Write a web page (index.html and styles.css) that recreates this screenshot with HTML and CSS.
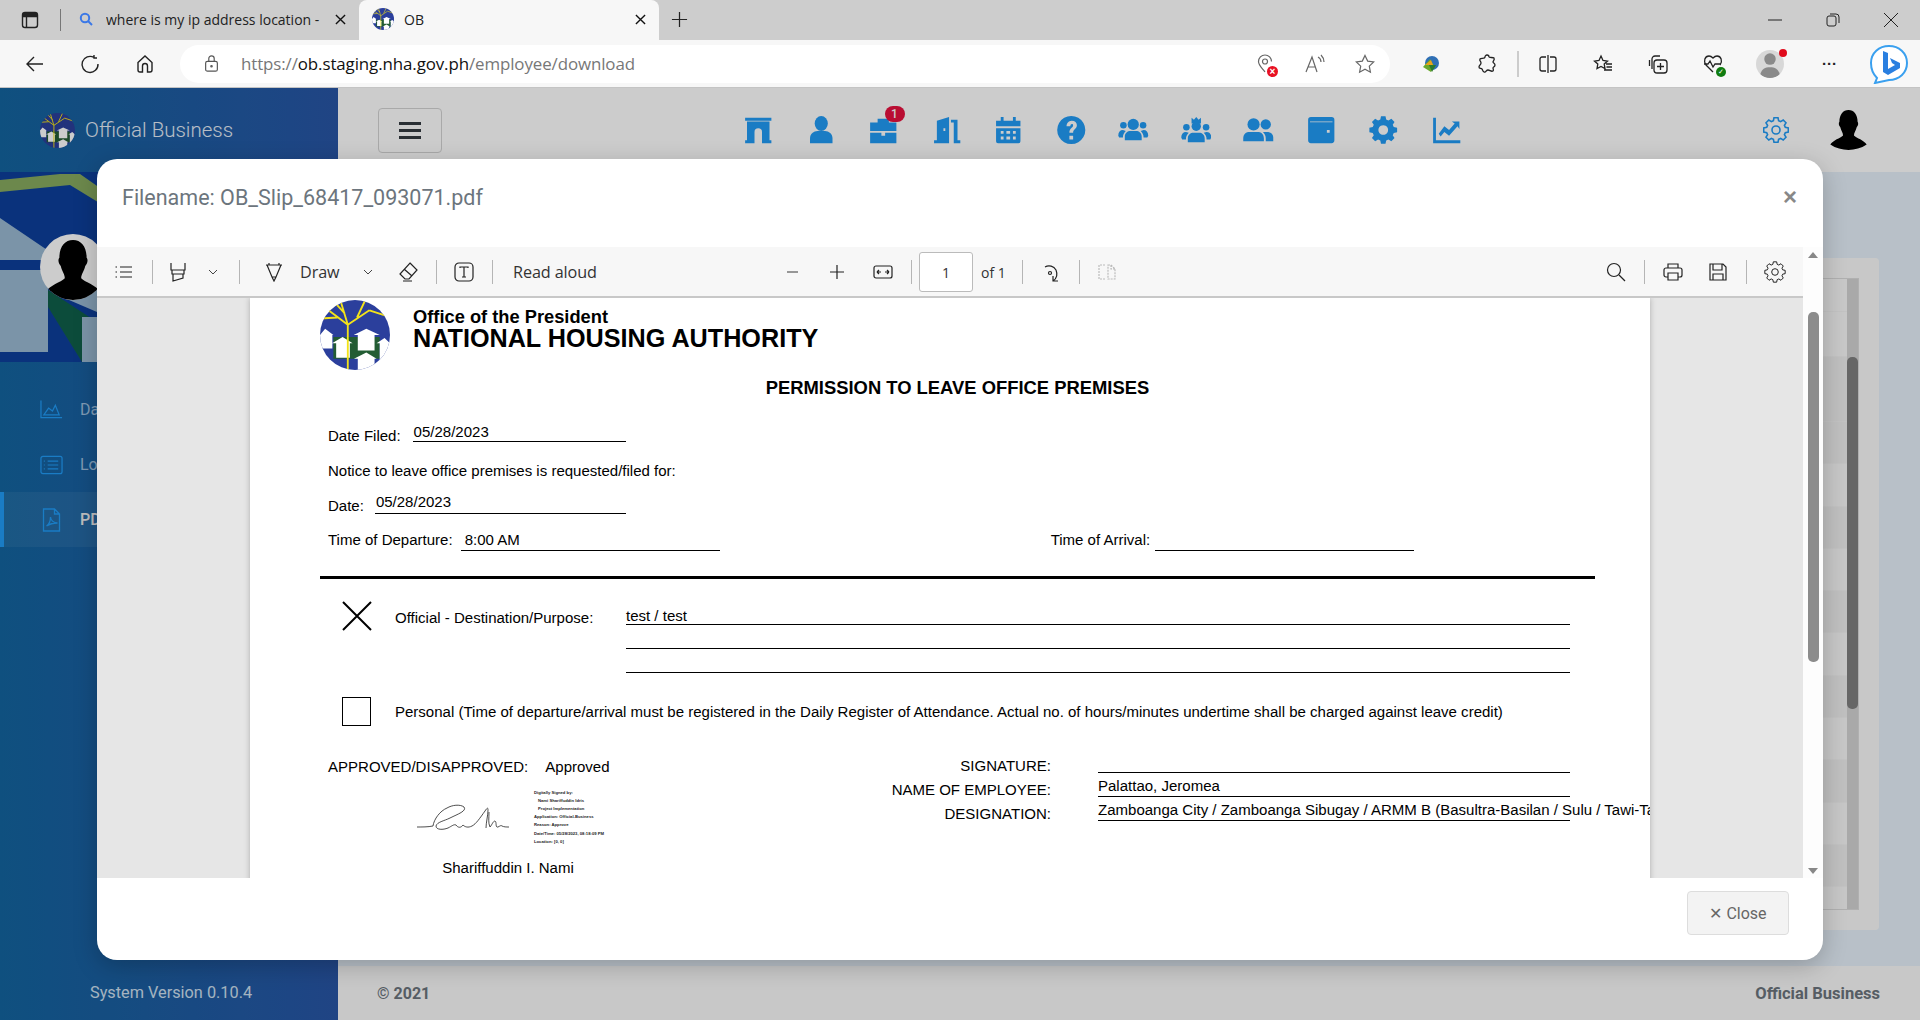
FILE: index.html
```html
<!DOCTYPE html>
<html lang="en">

<head>
  <meta charset="UTF-8">
  <title>OB</title>
  <link rel="stylesheet" href="styles.css">
</head>

<body>
  <svg class="defs" width="0" height="0">
    <symbol id="nha" viewBox="0 0 68 68">
      <clipPath id="nha-clip"><ellipse cx="34" cy="34" rx="34" ry="34" /></clipPath>
      <g clip-path="url(#nha-clip)">
        <rect width="68" height="68" fill="#2b3f9c" />
        <path d="M13 36h45v21H13z" fill="#235c33" />
        <path d="M0 34l5-6 8 6h-1v13H0zM11.700 42 22 36l9.700 6H29v14H15.700V42zM32.700 34 45 28l13 6h-5v15H36.700V34zM55 42l7.700-5 5.300 5v18H58V42zM33 57l12-6 10 6h-2v11H36.700V57z" fill="#fff" />
        <path d="M27 68V24M27 24 7 9M17 17 0 18M27 24 20 1M24 13 14 2M27 24 48 10M48 10l18 6M36 17 44 0" stroke="#f2e21a" stroke-width="1.800" fill="none" />
      </g>
    </symbol>
    <symbol id="silhouette" viewBox="0 0 40 44">
      <path d="M10 13C10 5 14 0 20 0s10 5 10 13c1 1 1 4-1 6-1 4-3 6-3 9 3 3 11 5 14 10-6 4-13 6-20 6S6 42 0 38c3-5 11-7 14-10 0-3-2-5-3-9-2-2-2-5-1-6z" />
    </symbol>
    <symbol id="gear" viewBox="-1 1 26 26.6">
      <path d="M10 2h4l.6 3 2 .9 2.6-1.6 2.8 2.8-1.6 2.6.9 2 3 .6v4l-3 .6-.9 2 1.6 2.6-2.8 2.8-2.6-1.6-2 .9-.6 3h-4l-.6-3-2-.9-2.6 1.6-2.8-2.8 1.6-2.6-.9-2-3-.6v-4l3-.6.9-2-1.6-2.6 2.8-2.8 2.6 1.6 2-.9z" />
      <circle cx="12" cy="14.3" r="4" />
    </symbol>
    <symbol id="gear-solid" viewBox="-1 1 26 26.6">
      <path fill-rule="evenodd" d="M10 2h4l.6 3 2 .9 2.6-1.6 2.8 2.8-1.6 2.6.9 2 3 .6v4l-3 .6-.9 2 1.6 2.6-2.8 2.8-2.6-1.6-2 .9-.6 3h-4l-.6-3-2-.9-2.6 1.6-2.8-2.8 1.6-2.6-.9-2-3-.6v-4l3-.6.9-2-1.6-2.6 2.8-2.8 2.6 1.6 2-.9zM12 10a4.300 4.300 0 1 0 .01 0z" />
    </symbol>
  </svg>

  <!-- browser chrome -->
  <div class="tabstrip">
    <svg class="sidebar-toggle" viewBox="0 0 20 20"><rect x="2.5" y="2.5" width="15" height="15" rx="2.5" /><path d="M2.5 6.5h15M6.5 6.5v11" /><path d="M3 3h14v3.4H3z" class="solid" /></svg>
    <span class="tab-sep"></span>
    <div class="tab">
      <svg class="tab-icon" viewBox="0 0 16 16"><circle cx="7" cy="7" r="4.2" /><path d="M10 10l4 4" /></svg>
      <span class="tab-title">where is my ip address location -</span>
      <svg class="tab-x" viewBox="0 0 12 12"><path d="M1 1l10 10M11 1 1 11" /></svg>
    </div>
    <div class="tab active">
      <svg class="favicon"><use href="#nha" /></svg>
      <span class="tab-title">OB</span>
      <svg class="tab-x" viewBox="0 0 12 12"><path d="M1 1l10 10M11 1 1 11" /></svg>
    </div>
    <svg class="new-tab" viewBox="0 0 18 18"><path d="M9 1v16M1 9h16" /></svg>
    <div class="window-btns">
      <svg viewBox="0 0 14 14"><path d="M0 7h14" /></svg>
      <svg viewBox="0 0 14 14"><rect x="1" y="3" width="9" height="10" rx="2" /><path d="M4 1h6a3 3 0 0 1 3 3v6" /></svg>
      <svg viewBox="0 0 14 14"><path d="M0 0l14 14M14 0 0 14" /></svg>
    </div>
  </div>

  <div class="addressbar">
    <svg class="nav-btn" viewBox="0 0 20 20"><path d="M18 10H2M9 3l-7 7 7 7" /></svg>
    <svg class="nav-btn" viewBox="0 0 20 20"><path d="M14 3.5A8 8 0 1 0 18 10M14 1v3h3" /></svg>
    <svg class="nav-btn" viewBox="0 0 20 20"><path d="M3 8.5 10 2l7 6.500V16a2 2 0 0 1-2 2h-2.500v-6a2.500 2.500 0 0 0-5 0v6H5a2 2 0 0 1-2-2z" /></svg>
    <div class="url-pill">
      <svg class="lock" viewBox="0 0 16 20"><rect x="1.500" y="7" width="13" height="11" rx="2" /><path d="M5 7V4a3 3 0 0 1 6 0v3" /><circle cx="8" cy="12.500" r=".8" /></svg>
      <span class="url"><span class="url-dim">https://</span>ob.staging.nha.gov.ph<span class="url-dim">/employee/download</span></span>
      <div class="url-actions">
        <span class="url-action">
          <svg viewBox="0 0 20 20"><path d="M10 18C6 13 3.500 11 3.500 7.500a6.500 6.500 0 0 1 13 0" /><circle cx="10" cy="7.500" r="2.500" /></svg>
          <span class="blocked">×</span>
        </span>
        <span class="url-action"><svg viewBox="0 0 20 20"><path d="M1 18 7 3l5 15M3 13h7M13 3c2 1 3 3 3 5M16 1c2 2 3 4 3 7" /></svg></span>
        <span class="url-action"><svg viewBox="0 0 20 20"><path d="m10 1.500 2.700 5.600 6 .8-4.400 4.200 1.100 6.100-5.400-3-5.400 3 1.100-6.100L1.300 7.900l6-.8z" /></svg></span>
      </div>
    </div>
    <div class="ext-row">
      <svg class="ext idm" viewBox="0 0 20 20"><circle cx="11" cy="9" r="7" fill="#2f6fb5" /><path d="M2 13 9 5l4 7-3 6z" fill="#6aa82c" /><path d="M4 11 10 6l2 5z" fill="#e8a21c" /><path d="M8 11h7l-4 7z" fill="#2c7a2c" /></svg>
      <svg class="ext" viewBox="0 0 20 20"><path d="M8 3a2 2 0 0 1 4 0c0 1 4 0 5 1 1 2-1 3-1 4 0 1 2 1 2 3s-2 2-2 3 1 2 0 3c-2 1-3-1-5-1s-2 3-4 2-1-2-2-3-3 0-3-2 2-2 2-4-2-2-1-4c1-1 5 0 5-2z" /></svg>
      <span class="ext-sep"></span>
      <svg class="ext" viewBox="0 0 20 20"><path d="M8 3H4a2 2 0 0 0-2 2v10a2 2 0 0 0 2 2h4M12 3h4a2 2 0 0 1 2 2v10a2 2 0 0 1-2 2h-4M10 1v18" /></svg>
      <svg class="ext" viewBox="0 0 20 20"><path d="m8 2 2 4.500 4.500.6-3.300 3 .8 4.500L8 12.500 4 14.600l.8-4.500-3.300-3L6 6.500zM13 10h6M13.500 13H19M11 16h8" /></svg>
      <svg class="ext" viewBox="0 0 20 20"><path d="M4 15V5a3 3 0 0 1 3-3h5M1.500 12V6" /><rect x="6" y="6" width="13" height="13" rx="3" /><path d="M12.500 9v7M9 12.500h7" /></svg>
      <span class="ext-health">
        <svg class="ext" viewBox="0 0 20 20"><path d="M10 18 3 11C0 7 2 2 6 2c2 0 3 1 4 2 1-1 2-2 4-2 4 0 6 5 3 9M1 10h4l2-3 3 6 2-3h6" /></svg>
        <span class="health-ok">✓</span>
      </span>
      <span class="profile"><svg viewBox="0 0 28 34"><circle cx="14" cy="11" r="7" /><path d="M2 30c2-7 6-9 12-9s10 2 12 9c-3 3-7 4-12 4S5 33 2 30z" /></svg><span class="profile-dot"></span></span>
      <span class="ext-dots">···</span>
      <span class="bing"><svg viewBox="0 0 40 40"><path d="M20 2c10 0 18 7 18 17S30 36 20 36l-14 3 2-5C4 30 2 25 2 19 2 9 10 2 20 2z" fill="#fff" stroke="#3aa0ef" stroke-width="2" /><path d="M14 7l5 2v16l7-4-3-2-2-5 10 5v5l-12 7-5-3z" fill="#2a7fe0" /></svg></span>
    </div>
  </div>

  <!-- application behind the dialog -->
  <div class="app">
    <aside class="sidebar">
      <div class="brand">
        <svg class="brand-logo"><use href="#nha" /></svg>
        <span class="brand-name">Official Business</span>
      </div>
      <div class="cover">
        <svg viewBox="0 0 338 190" preserveAspectRatio="none">
          <rect width="338" height="190" fill="#0d3f9c" />
          <path d="M0 8 60 2h20l40 28-14 5-36-22L0 20z" fill="#88aa60" />
          <path d="M0 46 62 88H0zM0 98h48v82H0z" fill="#9ab9d2" />
          <path d="M48 118 97 150v40H82L48 135z" fill="#10604a" />
          <path d="M55 122 97 100v40zM82 145h30v45H82z" fill="#9ab9d2" />
        </svg>
        <span class="avatar"><svg><use href="#silhouette" /></svg></span>
      </div>
      <nav class="menu">
        <a class="menu-item">
          <svg viewBox="0 0 24 20"><path d="M1 0v18h22M4 15l5-7 4 3 3-6 4 10z" /></svg>
          <span>Dashboard</span>
        </a>
        <a class="menu-item">
          <svg viewBox="0 0 24 20"><rect x="1" y="1" width="22" height="18" rx="2" /><path d="M8 6h11M8 10h11M8 14h11M4 6h1M4 10h1M4 14h1" /></svg>
          <span>Logs</span>
        </a>
        <a class="menu-item current">
          <svg viewBox="0 0 18 24"><path d="M1 1h11l5 5v17H1zM12 1v5h5M4 18c3-2 4-6 4-9 0 3 3 6 7 6-4 0-8 1-11 3z" /></svg>
          <span>PDF</span>
        </a>
      </nav>
      <footer class="sidebar-foot">System Version 0.10.4</footer>
    </aside>

    <div class="content">
      <header class="topbar">
        <button class="hamburger"><i></i><i></i><i></i></button>
        <div class="top-icons">
          <svg class="ti" viewBox="0 0 32 32"><path d="M2 3h28v3H2zM4 7h24v20h2v3H20v-3V18a4 4 0 0 0-8 0v9 3H2v-3h2z" /></svg>
          <svg class="ti" viewBox="0 0 32 32"><ellipse cx="16" cy="9" rx="7" ry="8" /><path d="M4 30v-5c0-5 4-8 8-8h8c4 0 8 3 8 8v5z" /></svg>
          <span class="ti-badge">
            <svg class="ti" viewBox="0 0 32 32"><path d="M10 8V4h12v4h8v9H2V8zM2 19h12v3h4v-3h12v11H2z" /></svg>
            <span class="badge">1</span>
          </span>
          <svg class="ti" viewBox="0 0 32 32"><path d="M3 27h3V6l13-4v28H3zM13 14v3h2v-3z" fill-rule="evenodd" /><path d="M21 5h7v22h3v3h-7V8h-3z" /></svg>
          <svg class="ti" viewBox="0 0 32 32"><path d="M3 6h5V2h3v4h10V2h3v4h5v6H3zM3 14h26v14a2 2 0 0 1-2 2H5a2 2 0 0 1-2-2zM8 17v3h3v-3zm6 0v3h4v-3zm7 0v3h3v-3zM8 23v3h3v-3zm6 0v3h4v-3zm7 0v3h3v-3z" fill-rule="evenodd" /></svg>
          <svg class="ti" viewBox="0 0 32 32"><path d="M16 1a15 15 0 1 0 .01 0zM11 12c0-3 2-6 5.500-6s5.500 2 5.500 5c0 4-4 4-4 8h-4c0-5 4-5 4-8 0-2-3-2-3 1zM14 22h4v4h-4z" fill-rule="evenodd" /></svg>
          <svg class="ti" viewBox="0 0 32 32"><circle cx="16" cy="10" r="6" /><circle cx="5.500" cy="11" r="3.500" /><circle cx="26.500" cy="11" r="3.500" /><path d="M7 27v-4c0-4 3-6 6-6h6c3 0 6 2 6 6v4zM0 22c0-4 2-6 5-6l3 1c-2 2-3 4-3 7H1zM32 22c0-4-2-6-5-6l-3 1c2 2 3 4 3 7h4z" /></svg>
          <svg class="ti" viewBox="0 0 32 32"><path d="M11 3l2.500 2L16 2l2.500 3L21 3v6H11z" /><circle cx="16" cy="12" r="5" /><circle cx="5.500" cy="13" r="3.500" /><circle cx="26.500" cy="13" r="3.500" /><path d="M7 29v-4c0-4 3-6 6-6h6c3 0 6 2 6 6v4zM0 24c0-4 2-6 5-6l3 1c-2 2-3 4-3 7H1zM32 24c0-4-2-6-5-6l-3 1c2 2 3 4 3 7h4z" /></svg>
          <svg class="ti" viewBox="0 0 32 32"><circle cx="11" cy="10" r="6.500" /><circle cx="24" cy="10" r="5.500" /><path d="M0 28v-3c0-5 3-7 7-7h8c4 0 7 2 7 7v3zM24 28v-3c0-3-1-5-3-7h4c4 0 7 2 7 6v4z" /></svg>
          <svg class="ti" viewBox="0 0 32 32"><path d="M5 2h22a3 3 0 0 1 3 3v22a3 3 0 0 1-3 3H5a3 3 0 0 1-3-3V5a3 3 0 0 1 3-3zm-1 5v.800h24V7zM22 16v3h3v-3z" fill-rule="evenodd" /></svg>
          <svg class="ti"><use href="#gear-solid" /></svg>
          <svg class="ti" viewBox="0 0 32 32"><path d="M2 3h3v24h26v3H2zM8 20l6-8 5 4 6-7-3-2h8v8l-2-3-9 10-5-4-4 5z" /></svg>
        </div>
        <svg class="top-gear"><use href="#gear" /></svg>
        <svg class="top-user"><use href="#silhouette" /></svg>
      </header>
      <main class="page-body">
        <div class="panel">
          <div class="grid-box">
            <div class="tr head"></div>
            <div class="tr first"></div>
            <div class="tr tall"></div>
            <div class="tr"></div>
            <div class="tr"></div>
            <div class="tr"></div>
            <div class="tr"></div>
            <div class="tr"></div>
            <div class="tr"></div>
            <div class="tr"></div>
            <div class="tr"></div>
            <div class="tr"></div>
            <div class="tr"></div>
            <div class="tr"></div>
            <div class="grid-scroll"><span></span></div>
          </div>
        </div>
      </main>
      <footer class="foot">
        <span class="copy">© 2021</span>
        <span class="foot-name">Official Business</span>
      </footer>
    </div>
    <div class="backdrop"></div>

    <!-- pdf dialog -->
    <section class="modal">
      <div class="modal-head">
        <span class="modal-title">Filename: OB_Slip_68417_093071.pdf</span>
        <span class="modal-x">×</span>
      </div>
      <div class="modal-mid">
        <div class="viewer">
          <div class="pdf-tools">
            <div class="tool-group first-group">
              <svg class="tool" viewBox="0 0 20 20"><path d="M6 5h12M6 10h12M6 15h12M1.500 5h1.500M1.500 10h1.500M1.500 15h1.500" /></svg>
              <span class="sep ml11"></span>
              <svg class="tool ml8" viewBox="0 0 20 20"><path d="M3 1v7h14V1M4 8v4l12 0V8M5 12v7l10-3v-4" /></svg>
              <svg class="chev ml9" viewBox="0 0 10 6"><path d="m1 1 4 4 4-4" /></svg>
              <span class="sep ml17"></span>
              <svg class="tool ml17" viewBox="0 0 20 20"><path d="M2 3h16M5 1v2M15 1v2M3 3l5 12h4l5-12M8 15l2 4 2-4" /></svg>
              <span class="tool-label draw ml9">Draw</span>
              <svg class="chev ml19" viewBox="0 0 10 6"><path d="m1 1 4 4 4-4" /></svg>
              <svg class="tool ml14" viewBox="0 0 20 20"><path d="M12 1l7 7-8 9H7l-5-5zM6 7l8 7M5 19h9" /></svg>
              <span class="sep ml11"></span>
              <svg class="tool ml10" viewBox="0 0 20 20"><rect x="1" y="1" width="18" height="18" rx="4" /><path d="M6 6V5h8v1M10 5v10M8 15h4" /></svg>
              <span class="sep ml11"></span>
              <span class="tool-label ml20">Read aloud</span>
            </div>
            <div class="tool-group">
              <svg class="tool" viewBox="0 0 20 20"><path d="M5 10h11" class="soft" /></svg>
              <svg class="tool ml11" viewBox="0 0 20 20"><path d="M3 10h14M10 3v14" /></svg>
              <svg class="tool ml12" viewBox="0 0 20 20"><rect x="1" y="4" width="18" height="12" rx="2" /><path d="M4 10h4M4 10l2-2M4 10l2 2M16 10h-4M16 10l-2-2M16 10l-2 2" /></svg>
              <span class="sep ml11"></span>
              <input class="page-num ml7" value="1">
              <span class="page-of ml8">of 1</span>
              <span class="sep ml16"></span>
              <svg class="tool ml10" viewBox="0 0 20 20"><path d="M5 5a8 8 0 0 1 11 3c2 5 0 9-3 11M13 14v5h5" /><circle cx="10" cy="11" r="1.500" /></svg>
              <span class="sep ml12"></span>
              <svg class="tool ml10 faint" viewBox="0 0 20 20"><path d="M8 3H2v14h6M11 3h3l4 4v10h-7zM14 3v4h4" stroke-dasharray="2 1" /></svg>
            </div>
            <div class="tool-group last-group">
              <svg class="tool" viewBox="0 0 20 20"><circle cx="8" cy="8" r="6.500" /><path d="m13 13 6 6" /></svg>
              <span class="sep ml11"></span>
              <svg class="tool ml11" viewBox="0 0 20 20"><path d="M5 6V2h10v4M5 15H3a2 2 0 0 1-2-2V8a2 2 0 0 1 2-2h14a2 2 0 0 1 2 2v5a2 2 0 0 1-2 2h-2M5 11h10v7H5z" /></svg>
              <svg class="tool ml11" viewBox="0 0 20 20"><path d="M2 2h13l3 3v13H2zM5 2v6h9V2M5 18v-6h10v6" /></svg>
              <span class="sep ml11"></span>
              <svg class="tool ml11 tool-gear"><use href="#gear" /></svg>
            </div>
          </div>

          <div class="pdf-area">
            <div class="sheet">
              <div class="letterhead">
                <svg class="sheet-logo"><use href="#nha" /></svg>
                <div class="agency">
                  <div class="agency-top">Office of the President</div>
                  <div class="agency-name">NATIONAL HOUSING AUTHORITY</div>
                </div>
              </div>
              <h2 class="sheet-title">PERMISSION TO LEAVE OFFICE PREMISES</h2>

              <div class="line-row filed">
                <span>Date Filed:</span>
                <span class="field field-filed">05/28/2023</span>
              </div>
              <div class="line-row notice">Notice to leave office premises is requested/filed for:</div>
              <div class="line-row dated">
                <span>Date:</span>
                <span class="field field-date">05/28/2023</span>
              </div>
              <div class="line-row times">
                <span>Time of Departure:</span>
                <span class="field field-time">8:00 AM</span>
                <span class="arrival">Time of Arrival:</span>
                <span class="field field-time"></span>
              </div>
              <div class="rule"></div>

              <div class="choice official">
                <svg class="mark" viewBox="0 0 30 30"><path d="M1 1l28 28M29 1 1 29" /></svg>
                <span class="choice-label">Official - Destination/Purpose:</span>
                <div class="purpose">
                  <div class="purpose-line">test / test</div>
                  <div class="purpose-line"></div>
                  <div class="purpose-line"></div>
                </div>
              </div>
              <div class="choice personal">
                <span class="checkbox"></span>
                <span class="choice-label">Personal (Time of departure/arrival must be registered in the Daily Register of Attendance. Actual no. of hours/minutes undertime shall be charged against leave credit)</span>
              </div>

              <div class="signing">
                <div class="approver">
                  <div class="approved"><span>APPROVED/DISAPPROVED:</span><span>Approved</span></div>
                  <div class="sign-block">
                    <svg class="signature" viewBox="0 0 94 26"><path d="M1 22C6 22 12 22 17 21 18 14 24 6 31 3 36 0 44-1 48 2 51 6 42 9 34 13 28 16 21 17 20 21 20 25 27 25 32 23 36 21 38 19 40 20 42 23 45 23 47 20 49 22 52 23 56 21 60 19 64 13 69 6 71 3 72 2 72 5 72 10 70 18 70 23M73 7C73 13 72 18 74 22 76 20 77 16 79 16 81 17 79 23 82 22 84 21 85 20 86 21 88 22 90 22 93 22" /></svg>
                    <div class="stamp">
                      <div>Digitally Signed by:</div>
                      <div class="ind">Nami Shariffuddin Idris</div>
                      <div class="ind">Project Implementation</div>
                      <div>Application: Official-Business</div>
                      <div>Reason: Approve</div>
                      <div>Date/Time: 05/28/2023, 08:18:09 PM</div>
                      <div>Location: [0, 0]</div>
                    </div>
                  </div>
                  <div class="approver-name">Shariffuddin I. Nami</div>
                </div>
                <div class="employee">
                  <div class="emp-row"><span class="emp-label">SIGNATURE:</span><span class="emp-value"></span></div>
                  <div class="emp-row"><span class="emp-label">NAME OF EMPLOYEE:</span><span class="emp-value">Palattao, Jeromea</span></div>
                  <div class="emp-row"><span class="emp-label">DESIGNATION:</span><span class="emp-value long">Zamboanga City / Zamboanga Sibugay / ARMM B (Basultra-Basilan / Sulu / Tawi-Tawi)</span></div>
                </div>
              </div>
            </div>
          </div>
        </div>
        <div class="modal-scroll">
          <span class="arrow-up"></span>
          <span class="thumb"></span>
          <span class="arrow-down"></span>
        </div>
      </div>
      <div class="modal-foot">
        <button class="close-btn">✕ Close</button>
      </div>
    </section>
  </div>
</body>

</html>
```

FILE: styles.css
```css
* {
  box-sizing: border-box;
}

html,
body {
  margin: 0;
  height: 100%;
  overflow: hidden;
}

body {
  display: flex;
  flex-direction: column;
  font-family: Roboto, "Noto Sans", sans-serif;
  background: #fff;
}

.defs {
  position: absolute;
}

svg {
  display: block;
  flex: none;
}

/* browser chrome */

.tabstrip {
  height: 40px;
  background: #cdcdcd;
  display: flex;
  align-items: flex-end;
  flex: none;
}

.sidebar-toggle {
  width: 20px;
  height: 20px;
  margin: 0 20px 10px 20px;
  fill: none;
  stroke: #222;
  stroke-width: 1.4;
}

.sidebar-toggle .solid {
  fill: #222;
  stroke: none;
}

.tab-sep {
  width: 1px;
  height: 22px;
  background: #777;
  margin-bottom: 9px;
}

.tab {
  width: 298px;
  height: 40px;
  display: flex;
  align-items: center;
  padding: 0 13px 2px 17px;
  font-size: 14px;
  color: #222;
}

.tab.active {
  background: #f7f7f7;
  border-radius: 8px 8px 0 0;
  width: 300px;
  padding: 0 13px 2px 13px;
}

.tab-icon {
  width: 16px;
  height: 16px;
  fill: none;
  stroke: #3b78e7;
  stroke-width: 2;
  margin-right: 12px;
}

.favicon {
  width: 22px;
  height: 22px;
  margin-right: 10px;
}

.tab-title {
  flex: 1;
  white-space: nowrap;
  overflow: hidden;
  font-family: "Open Sans", sans-serif;
}

.tab-x {
  width: 11px;
  height: 11px;
  fill: none;
  stroke: #111;
  stroke-width: 1.5;
  flex: none;
}

.new-tab {
  width: 17px;
  height: 17px;
  margin: 0 0 12px 12px;
  fill: none;
  stroke: #222;
  stroke-width: 1.3;
}

.window-btns {
  margin-left: auto;
  display: flex;
  gap: 44px;
  padding: 0 22px 13px 0;
}

.window-btns svg {
  width: 14px;
  height: 14px;
  fill: none;
  stroke: #222;
  stroke-width: 1;
}

.addressbar {
  height: 48px;
  background: #f7f7f7;
  border-bottom: 1px solid #c4c4c4;
  display: flex;
  align-items: center;
  padding-left: 25px;
  flex: none;
}

.nav-btn {
  width: 20px;
  height: 20px;
  margin-right: 35px;
  fill: none;
  stroke: #222;
  stroke-width: 1.4;
}

.url-pill {
  width: 1210px;
  height: 38px;
  margin-left: -10px;
  background: #fff;
  border-radius: 19px;
  display: flex;
  align-items: center;
  padding-left: 24px;
}

.lock {
  width: 15px;
  height: 18px;
  fill: none;
  stroke: #555;
  stroke-width: 1.3;
}

.url {
  margin-left: 22px;
  font: 16.900px "Open Sans", sans-serif;
  color: #111;
  letter-spacing: -.1px;
}

.url-dim {
  color: #777;
}

.url-actions {
  margin-left: auto;
  display: flex;
  gap: 30px;
  padding-right: 15px;
}

.url-action {
  position: relative;
  width: 20px;
  height: 20px;
}

.url-action svg {
  width: 20px;
  height: 20px;
  fill: none;
  stroke: #666;
  stroke-width: 1.2;
}

.blocked {
  position: absolute;
  right: -3px;
  bottom: -3px;
  width: 11px;
  height: 11px;
  border-radius: 50%;
  background: #e81123;
  color: #fff;
  font: bold 10px/11px "Liberation Sans", sans-serif;
  text-align: center;
}

.ext-row {
  display: flex;
  align-items: center;
  flex: 1;
  padding-left: 31px;
}

.ext {
  width: 20px;
  height: 20px;
  margin-right: 35px;
  fill: none;
  stroke: #222;
  stroke-width: 1.3;
}

.idm {
  stroke: none;
  margin-right: 36px;
}

.ext-sep {
  width: 2px;
  height: 26px;
  background: #ccc;
  margin: 0 19px 0 -15px;
}

.ext-health {
  position: relative;
  margin-right: 35px;
}

.ext-health .ext {
  margin-right: 0;
}

.health-ok {
  position: absolute;
  right: -3px;
  bottom: -3px;
  width: 10px;
  height: 10px;
  border-radius: 50%;
  background: #107c10;
  color: #fff;
  font: bold 7px/10px "DejaVu Sans", sans-serif;
  text-align: center;
}

.profile {
  position: relative;
  width: 28px;
  height: 28px;
  border-radius: 50%;
  background: #d8d8d8;
  overflow: visible;
  margin-left: -2px;
}

.profile svg {
  width: 28px;
  height: 28px;
  fill: #8a8a8a;
  border-radius: 50%;
}

.profile-dot {
  position: absolute;
  top: -1px;
  right: -3px;
  width: 8px;
  height: 8px;
  border-radius: 50%;
  background: #e00b1c;
}

.ext-dots {
  margin-left: 38px;
  width: 20px;
  font: bold 15px "Liberation Sans", sans-serif;
  color: #222;
  letter-spacing: 0;
}

.bing {
  margin-left: 27px;
}

.bing svg {
  width: 40px;
  height: 40px;
}

/* application */

.app {
  flex: 1;
  display: flex;
  position: relative;
  min-height: 0;
}

.sidebar {
  width: 338px;
  background: linear-gradient(90deg, #13649f, #2856a6);
  display: flex;
  flex-direction: column;
  color: #cfe0f0;
}

.brand {
  height: 84px;
  display: flex;
  align-items: center;
  padding-left: 40px;
  flex: none;
}

.brand-logo {
  width: 35px;
  height: 35px;
  margin-right: 10px;
}

.brand-name {
  font-size: 20.500px;
  font-weight: 300;
  color: #e6eef8;
}

.cover {
  height: 190px;
  position: relative;
  flex: none;
}

.cover svg {
  width: 100%;
  height: 100%;
}

.avatar {
  position: absolute;
  left: 40px;
  top: 62px;
  width: 66px;
  height: 66px;
  border-radius: 50%;
  background: #fff;
  overflow: hidden;
  display: flex;
  justify-content: center;
  align-items: flex-end;
}

.avatar svg {
  width: 66px;
  height: 60px;
  fill: #000;
}

.menu {
  padding-top: 20px;
  flex: 1;
}

.menu-item {
  height: 55px;
  display: flex;
  align-items: center;
  padding-left: 40px;
  font-size: 16px;
  color: #9fc0e0;
}

.menu-item svg {
  width: 23px;
  height: 20px;
  margin-right: 17px;
  fill: none;
  stroke: #219bf6;
  stroke-width: 1.3;
}

.menu-item.current {
  background: rgba(255, 255, 255, .06);
  border-left: 4px solid #219bf6;
  padding-left: 36px;
  color: #eee;
  font-weight: 500;
}

.menu-item.current svg {
  height: 24px;
}

.sidebar-foot {
  height: 54px;
  padding-left: 90px;
  line-height: 54px;
  font-size: 16.300px;
}

.content {
  flex: 1;
  min-width: 0;
  display: flex;
  flex-direction: column;
  background: #e7f1fb;
}

.topbar {
  height: 84px;
  background: #fff;
  display: flex;
  align-items: center;
  padding-left: 40px;
  flex: none;
}

.hamburger {
  width: 64px;
  height: 45px;
  border: 1px solid #d4d4d4;
  border-radius: 4px;
  background: none;
  display: flex;
  flex-direction: column;
  align-items: center;
  justify-content: center;
  gap: 4px;
  padding: 0;
}

.hamburger i {
  width: 22px;
  height: 3px;
  background: #343a40;
}

.top-icons {
  display: flex;
  align-items: center;
  gap: 32px;
  margin-left: 301px;
}

.ti {
  width: 30.500px;
  height: 30px;
  fill: #219bf6;
}

.ti-badge {
  position: relative;
}

.badge {
  position: absolute;
  top: -9px;
  right: -6px;
  width: 20px;
  height: 16px;
  border-radius: 8px;
  background: #e8113f;
  color: #fff;
  font: 500 12px/16px Roboto, sans-serif;
  text-align: center;
}

.top-gear {
  width: 26px;
  height: 30px;
  margin-left: auto;
  fill: none;
  stroke: #219bf6;
  stroke-width: 1.6;
}

.top-user {
  width: 37px;
  height: 40px;
  margin: 0 53px 0 41px;
  fill: #000;
}

.page-body {
  flex: 1;
  min-height: 0;
  padding: 86px 41px 35px 40px;
}

.panel {
  height: 672px;
  background: #fbfbfb;
  border-radius: 4px;
  padding: 20px;
}

.grid-box {
  height: 632px;
  position: relative;
  border: 1px solid #ddd;
  overflow: hidden;
  background: #f9f9f9;
}

.tr {
  height: 42.300px;
  border-bottom: 1px solid #f4f4f4;
}

.tr:nth-child(even) {
  background: #f1f1f1;
}

.tr.head {
  height: 33px;
  background: #fbfbfb;
}

.tr.first {
  height: 45px;
  background: #fafafa;
}

.tr.tall {
  height: 65px;
  background: #f0f0f0;
}

.grid-scroll {
  position: absolute;
  top: 0;
  right: 0;
  bottom: 0;
  width: 11px;
  background: #d4d4d4;
}

.grid-scroll span {
  display: block;
  margin-top: 78px;
  height: 352px;
  background: #808080;
  border-radius: 5px;
}

.foot {
  height: 54px;
  background: #fafafa;
  display: flex;
  justify-content: space-between;
  align-items: center;
  padding: 0 40px 0 39px;
  font-size: 16px;
  font-weight: 700;
  color: #6c757d;
  flex: none;
}

.foot-name {
  font-size: 16.500px;
}

.backdrop {
  position: absolute;
  inset: 0;
  background: rgba(0, 0, 0, .2);
}

/* dialog */

.modal {
  position: absolute;
  left: 97px;
  top: 71px;
  width: 1726px;
  height: 801px;
  background: #fff;
  border-radius: 20px;
  box-shadow: 0 6px 24px rgba(0, 0, 0, .22);
  display: flex;
  flex-direction: column;
  overflow: hidden;
}

.modal-head {
  height: 88px;
  display: flex;
  justify-content: space-between;
  align-items: center;
  padding: 0 26px 13px 25px;
  flex: none;
}

.modal-title {
  font-size: 21.500px;
  color: #6c757d;
  padding-top: 2px;
}

.modal-x {
  font: bold 24px "Liberation Sans", sans-serif;
  color: #888;
}

.modal-mid {
  flex: 1;
  min-height: 0;
  display: flex;
}

.viewer {
  width: 1706px;
  display: flex;
  flex-direction: column;
}

.pdf-tools {
  height: 51px;
  background: #f7f7f7;
  border-bottom: 2px solid #c8c8c8;
  padding-top: 1px;
  display: grid;
  grid-template-columns: 678px 1fr auto;
  flex: none;
}

.tool-group {
  display: flex;
  align-items: center;
}

.first-group {
  padding-left: 10px;
}

.last-group {
  padding-right: 11px;
}

.tool {
  width: 34px;
  height: 20px;
  fill: none;
  stroke: #222;
  stroke-width: 1.2;
}

.tool.faint {
  stroke: #bbb;
}

.tool .soft {
  stroke: #777;
  stroke-width: 1.5;
}

.tool-gear {
  height: 22px;
}

.chev {
  width: 18px;
  height: 6px;
  fill: none;
  stroke: #444;
  stroke-width: 1;
}

.sep {
  width: 1px;
  height: 24px;
  background: #b5b5b5;
  flex: none;
}

.tool-label {
  font: 16.200px "Open Sans", sans-serif;
  color: #333;
  white-space: nowrap;
  letter-spacing: -.1px;
}

.tool-label.draw {
  width: 40px;
}

.ml7 { margin-left: 7px; }
.ml8 { margin-left: 8px; }
.ml9 { margin-left: 9px; }
.ml10 { margin-left: 10px; }
.ml11 { margin-left: 11px; }
.ml12 { margin-left: 12px; }
.ml14 { margin-left: 14px; }
.ml16 { margin-left: 16px; }
.ml17 { margin-left: 17px; }
.ml19 { margin-left: 19px; }
.ml20 { margin-left: 20px; }

.page-num {
  width: 54px;
  height: 40px;
  border: 1px solid #bbb;
  border-radius: 3px;
  background: #fff;
  text-align: center;
  font: 14px "Open Sans", sans-serif;
  color: #333;
}

.page-of {
  width: 25px;
  font: 14px "Open Sans", sans-serif;
  color: #333;
  white-space: nowrap;
}

.pdf-area {
  flex: 1;
  min-height: 0;
  background: #e6e6e6;
  padding: 0 153px;
  overflow: hidden;
}

.sheet {
  width: 1400px;
  height: 900px;
  background: #fff;
  box-shadow: 0 0 6px rgba(0, 0, 0, .25);
  padding: 2px 55px 0 70px;
  font: 15.030px "Liberation Sans", sans-serif;
  color: #000;
  overflow: hidden;
}

.letterhead {
  display: flex;
  height: 70px;
}

.sheet-logo {
  width: 70px;
  height: 70px;
}

.agency {
  margin: 7px 0 0 23px;
}

.agency-top {
  font-size: 18.300px;
  font-weight: 700;
  line-height: 20px;
}

.agency-name {
  font-size: 25.200px;
  font-weight: 700;
  line-height: 23px;
}

.sheet-title {
  margin: 0;
  padding-top: 6px;
  height: 52px;
  line-height: 24px;
  font-size: 18.400px;
  text-align: center;
}

.line-row {
  display: flex;
  align-items: flex-end;
  padding-left: 8px;
  line-height: 17px;
}

.line-row.filed {
  height: 20px;
}

.filed > span:first-child {
  margin-bottom: -2px;
}

.line-row.notice {
  height: 17px;
  margin-top: 20px;
}

.line-row.dated {
  height: 20px;
  margin-top: 15px;
}

.line-row.times {
  height: 20px;
  margin-top: 17px;
}

.times > span:not(.field) {
  margin-bottom: 3px;
}

.field {
  border-bottom: 1px solid #000;
  height: 19px;
  padding-left: 1px;
  line-height: 14px;
  white-space: nowrap;
}

.field-filed {
  width: 213px;
  margin-left: 12px;
  line-height: 18px;
}

.field-date {
  width: 251px;
  margin-left: 11px;
}

.field-time {
  width: 259px;
  margin-left: 8px;
  padding-left: 4px;
  line-height: 16px;
}

.arrival {
  margin-left: 331px;
}

.times .field-time:last-child {
  margin-left: 4.700px;
}

.rule {
  height: 3px;
  background: #000;
  margin-top: 25px;
}

.choice {
  display: flex;
  padding-left: 22px;
}

.official {
  margin-top: 22px;
  height: 75px;
}

.mark {
  width: 30px;
  height: 30px;
  fill: none;
  stroke: #000;
  stroke-width: 2;
}

.choice-label {
  margin-left: 23px;
  line-height: 17px;
  white-space: nowrap;
}

.official .choice-label {
  margin-top: 8px;
  width: 231px;
  flex: none;
}

.purpose {
  width: 944px;
}

.purpose-line {
  height: 24px;
  border-bottom: 1px solid #000;
  line-height: 30px;
  padding-bottom: 0;
}

.personal {
  margin-top: 20px;
  height: 30px;
  align-items: center;
}

.checkbox {
  width: 29px;
  height: 29px;
  border: 1.500px solid #000;
  flex: none;
}

.personal .choice-label {
  margin-left: 24px;
}

.signing {
  display: flex;
  margin-top: 32px;
  padding-left: 8px;
}

.approver {
  width: 353px;
  flex: none;
}

.approved {
  display: flex;
  gap: 17px;
  line-height: 17px;
}

.sign-block {
  display: flex;
  height: 70px;
  margin-top: 10px;
  padding-left: 88px;
}

.signature {
  width: 94px;
  height: 26px;
  margin-top: 19.500px;
  fill: none;
  stroke: #222;
  stroke-width: .8;
  overflow: visible;
}

.stamp {
  margin-left: 24px;
  font-size: 4.200px;
  font-weight: 700;
  line-height: 8.200px;
  color: #222;
  white-space: nowrap;
  padding-top: 3.500px;
}

.stamp .ind {
  padding-left: 4px;
}

.approver-name {
  text-align: center;
  width: 360px;
  margin-top: 4px;
}

.employee {
  flex: 1;
  min-width: 0;
  margin-top: -9.500px;
}

.emp-row {
  display: flex;
  height: 24px;
  align-items: flex-end;
  margin-left: 6px;
}

.emp-label {
  width: 364px;
  text-align: right;
  line-height: 17px;
  margin-bottom: -1.500px;
  flex: none;
}

.emp-value {
  width: 472px;
  margin-left: 47px;
  border-bottom: 1px solid #000;
  height: 19px;
  line-height: 16px;
  white-space: nowrap;
  flex: none;
}

.modal-scroll {
  width: 20px;
  background: #fdfdfd;
  display: flex;
  flex-direction: column;
  align-items: center;
  padding: 5px 0 4px;
}

.arrow-up,
.arrow-down {
  width: 0;
  height: 0;
  border-left: 5.500px solid transparent;
  border-right: 5.500px solid transparent;
}

.arrow-up {
  border-bottom: 6px solid #888;
}

.arrow-down {
  border-top: 6px solid #888;
  margin-top: auto;
}

.thumb {
  width: 11px;
  height: 350px;
  margin-top: 54px;
  background: #8c8c8c;
  border-radius: 5px;
}

.modal-foot {
  height: 82px;
  display: flex;
  justify-content: flex-end;
  align-items: flex-start;
  padding: 13px 34px 0 0;
  flex: none;
}

.close-btn {
  width: 102px;
  height: 44px;
  border: 1px solid #ddd;
  border-radius: 4px;
  background: #f3f3f3;
  color: #666;
  font: 16px Roboto, sans-serif;
}
```
